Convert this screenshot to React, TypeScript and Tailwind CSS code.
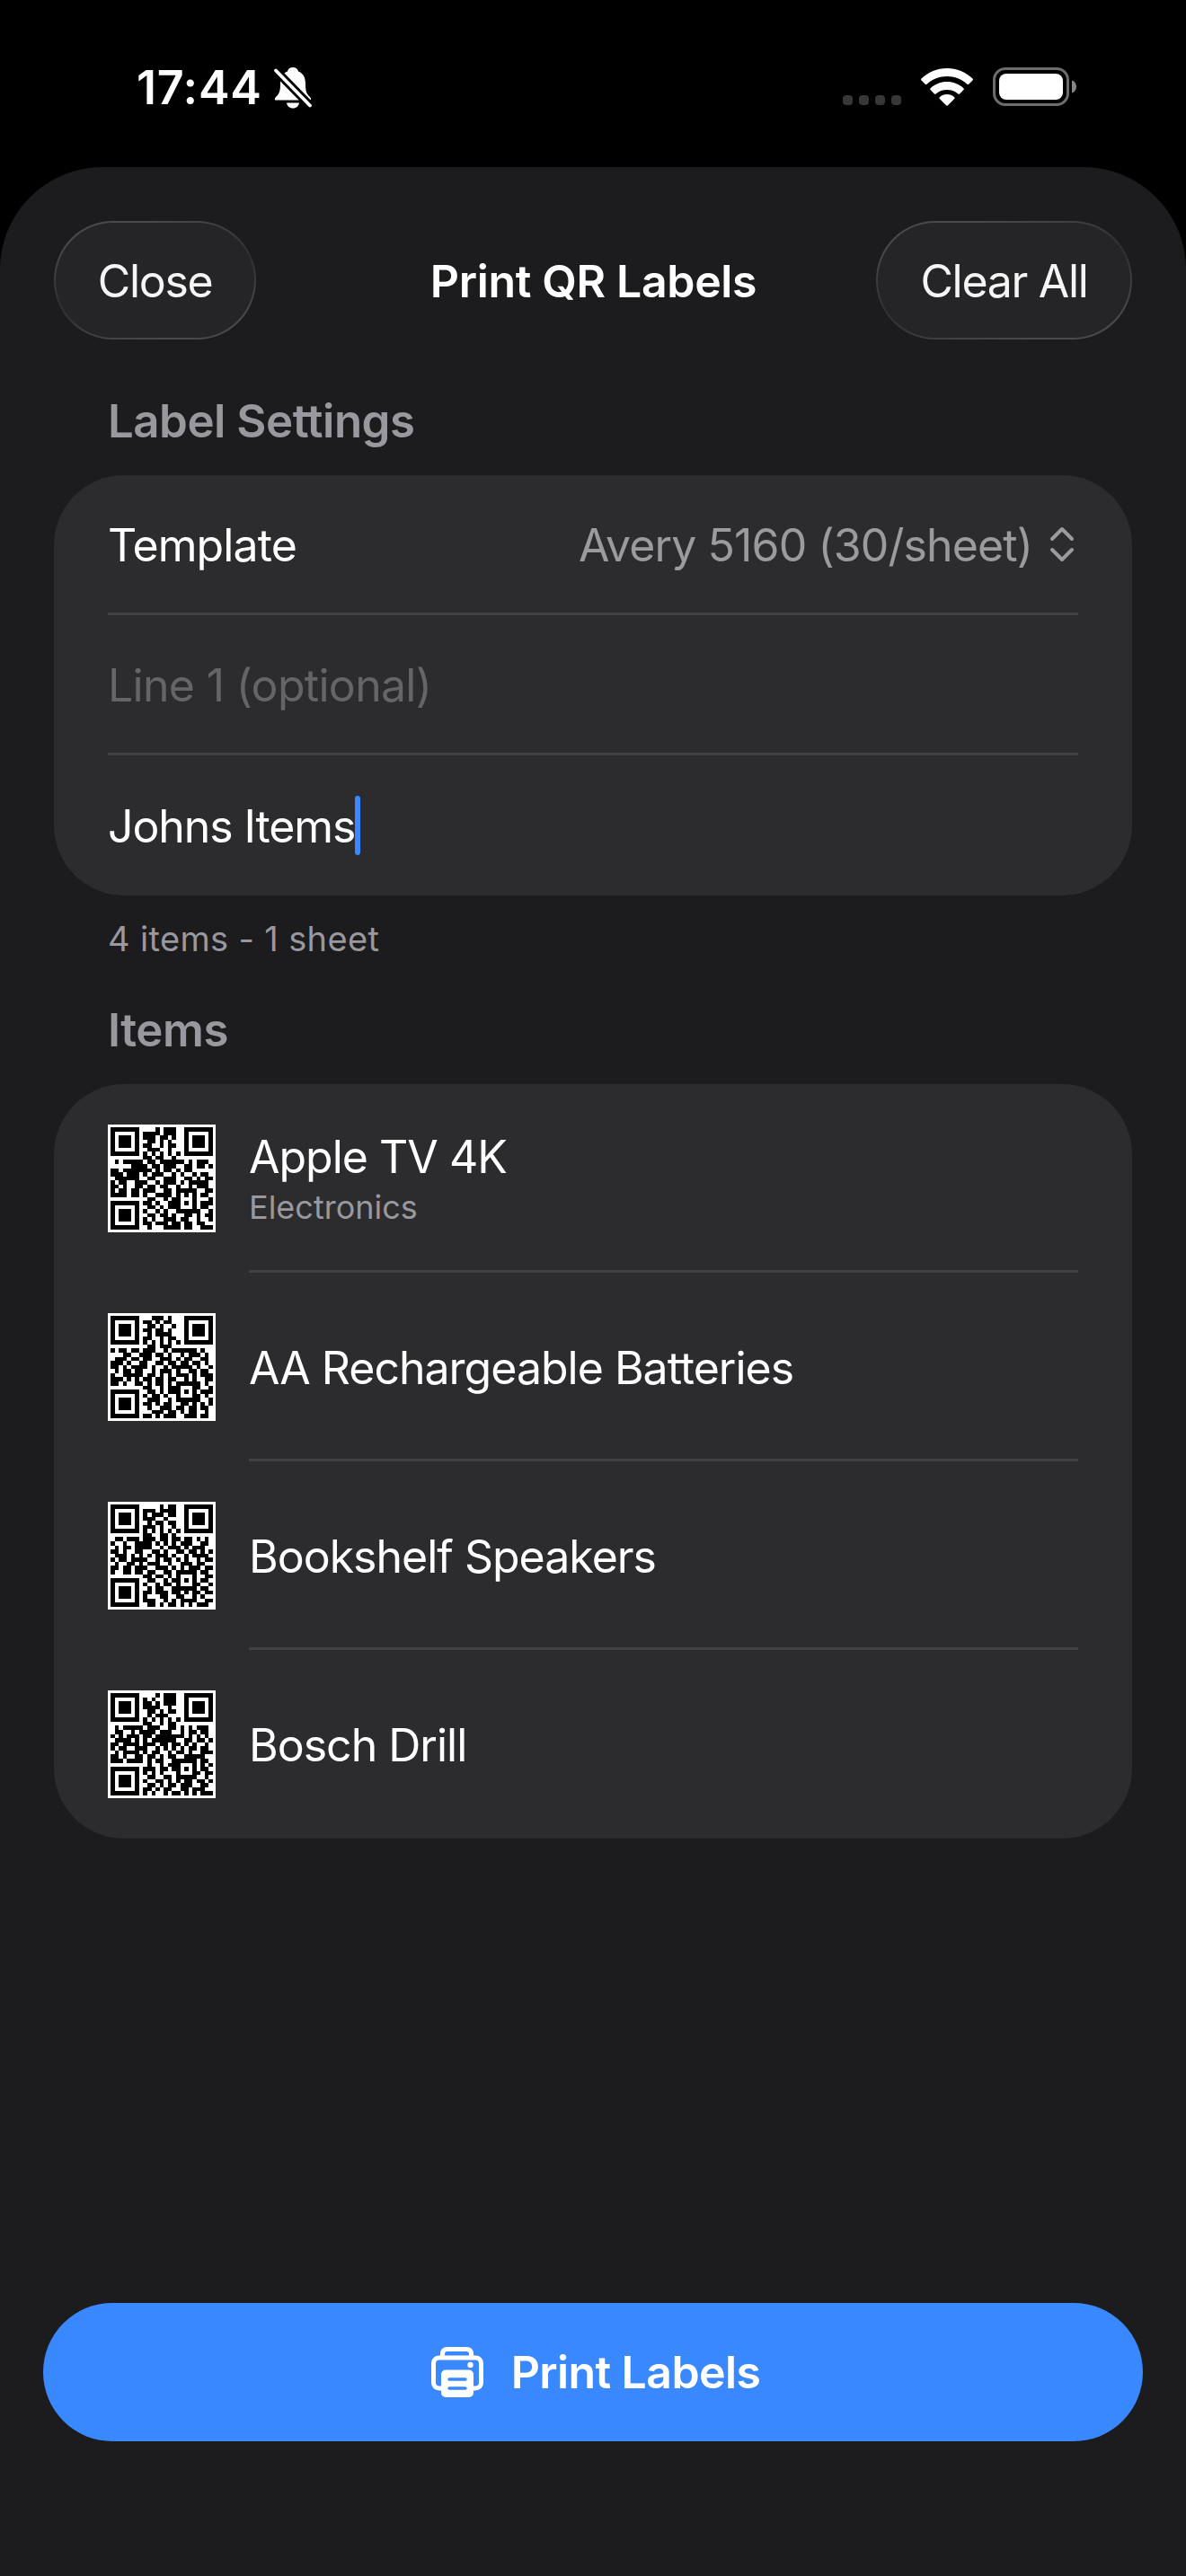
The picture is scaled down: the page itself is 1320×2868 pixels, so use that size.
import type { ReactNode } from "react";

type Item = {
  name: string;
  category?: string;
  code: string[];
};

const ITEMS: Item[] = [
  {
    name: "Apple TV 4K",
    category: "Electronics",
    code: [
      "...........#.###.........",
      "........####.###.........",
      "........###.##.#.........",
      ".........##.#.#..........",
      "........##..#.##.........",
      ".........###..#..........",
      "........#.#.#.#.#........",
      "........##.##..#.........",
      ".#.#####.##.######.#.###.",
      ".....####.##.###..##.##.#",
      "##.#######.#.##.#.##.....",
      "###.###.#.###..#.#..#.##.",
      ".######..##..###..##.#.##",
      "#.##..###..#.###.#.#####.",
      "##.#..##.##.##..#..#.###.",
      "#.##.##.###..##.#####..##",
      "####.##.#..####.#.#.#.##.",
      ".........##..#.##...#...#",
      "........##.#..###.#.#.###",
      ".........##.#.###...#.##.",
      "........#..#.#..######..#",
      ".........##.##.#..##.#.##",
      "........#.#..###.##..#..#",
      "........##.###.##.##.##..",
      ".........#...####.##..###",
    ],
  },
  {
    name: "AA Rechargeable Batteries",
    code: [
      "..........###.#..........",
      "........##.#.##..........",
      ".........##.#..#.........",
      "........##.##.#..........",
      ".........#.####..........",
      "........##..#.##.........",
      "........#.#.#.#.#........",
      ".........##.###..........",
      "#.##.##.###..#.######.#..",
      "...##..###.##.#..#.###.#.",
      ".###.##.##..###.#.##..##.",
      "###.#..##..##.##.##.##.#.",
      "##.#.####.#..#.#####.#..#",
      ".#.##.##..#.###.#..##.##.",
      "#..#####.##.#.#.###.#.###",
      "###.#.#.##.##.##..#.#..##",
      "##.#..##.#.##.#.######.#.",
      "........##..#.###...##..#",
      ".........##.#.###.#.#.###",
      "........#.##.#..#...##.#.",
      ".........###..#.######..#",
      "........##.#.##..##.#.#.#",
      ".........#..###.##.##.##.",
      "..........###.##.#.##..#.",
      "........##.#.###..###.##.",
    ],
  },
  {
    name: "Bookshelf Speakers",
    code: [
      "............#.##.........",
      "........###.####.........",
      "........#.###.##.........",
      "........###..#...........",
      ".........#.##.##.........",
      "........###.#..#.........",
      "........#.#.#.#.#........",
      "........##..##.#.........",
      ".##.###.###.##.##.##.#.#.",
      "#..#..####.#.#.#.###..##.",
      ".#.##.####..#.###.#.###..",
      "##.#..##..##.#..##.##.#.#",
      ".###.#.#.#.###.#..#.####.",
      "#.##.####..#.##.#.#..#.##",
      ".#..##.#.###..#..###.##..",
      "##.##.###..###.#.#.###.##",
      "#..##.##.##..##.#####.##.",
      "........##.##.#.#...#..##",
      ".........##..#.##.#.#.##.",
      "........#..#.##.#...##..#",
      ".........#.##..######.##.",
      "........##.###.##.#.##.##",
      "........#...##..##..#.#..",
      "........###..#.#.####..##",
      ".........##.#.##.#.#.###.",
    ],
  },
  {
    name: "Bosch Drill",
    code: [
      "...........#.###.........",
      "........#.#..###.........",
      "........##.#.###.........",
      "........####..#..........",
      ".........##.#.##.........",
      ".........#.###...........",
      "........#.#.#.#.#........",
      "........##..#.##.........",
      ".#.#####.###..##.#.#.###.",
      ".##..#.####.###..#.##.##.",
      "#.#.###.##.#######.#.#.#.",
      ".####.#.#.######..##.##.#",
      "##.####.###.##.##.#.#..#.",
      "#.##..###..#.#.#.#.##.##.",
      ".#.####.#.##..#.##.#..###",
      "##.#..##.##.#.##..#####..",
      "###.####.#.##..######.##.",
      ".........#..#.###...#.#.#",
      "........###.##.##.#.#.##.",
      "........#.#.#...#...##.##",
      ".........##..##.#####..#.",
      "........#..##.#.#.##.##.#",
      ".........##.#.##.###..##.",
      "........##.#.##..##.###..",
      "........#.#..#.##.#.#.###",
    ],
  },
];

const FINDERS = [
  [0, 0],
  [18, 0],
  [0, 18],
];

const QrCode = ({ code }: { code: string[] }) => {
  const modules = code
    .flatMap((row, y) =>
      [...row].map((cell, x) => (cell === "#" ? `M${x} ${y}h1v1h-1z` : "")),
    )
    .join("");

  return (
    <svg
      viewBox="-0.65 -0.65 26.3 26.3"
      className="size-[120px] shrink-0 bg-white"
      shapeRendering="crispEdges"
    >
      <path d={modules} fill="#000" />
      {FINDERS.map(([x, y]) => (
        <g key={`${x}-${y}`}>
          <rect x={x} y={y} width="7" height="7" fill="#000" />
          <rect x={x + 1} y={y + 1} width="5" height="5" fill="#fff" />
          <rect x={x + 2} y={y + 2} width="3" height="3" fill="#000" />
        </g>
      ))}
    </svg>
  );
};

const BellOff = () => (
  <svg viewBox="0 0 42 46" className="h-[46px] w-[42px]" fill="#fff">
    <path d="M21 0c-3.300 0-5.600 2-6 4.400C8.500 7 7 12.500 7 19c0 8-1.500 10.500-4.500 13.500C.5 34.500 0 36.500 2.500 36.500h37c2.500 0 2-2 0-4C36.500 29.500 35 27 35 19c0-6.500-1.500-12-8-14.600C26.600 2 24.300 0 21 0z" />
    <path d="M14 39.500h14c-.5 3.700-3.400 6-7 6s-6.500-2.300-7-6z" />
    <path d="M2 3.500l38 39" stroke="#000" strokeWidth="9.500" strokeLinecap="round" />
    <path d="M2 3.500l38 39" stroke="#fff" strokeWidth="3.800" strokeLinecap="round" />
  </svg>
);

const Wifi = () => (
  <svg viewBox="0 0 58 42" className="h-[42px] w-[58px]" fill="#fff">
    <path d="M29 0c11 0 21 4.300 28.500 11.500.6.6.6 1.300 0 1.900l-4.300 4.300c-.5.500-1.200.5-1.800 0C45.500 12 37.500 9 29 9S12.500 12 6.600 17.700c-.6.5-1.300.5-1.800 0L.5 13.400c-.6-.6-.6-1.300 0-1.900C8 4.300 18 0 29 0z" />
    <path d="M29 15c7 0 13.500 2.700 18.400 7.200.6.6.6 1.300 0 1.900l-4.300 4.300c-.6.5-1.200.5-1.800 0C38 25.500 33.700 24 29 24s-9 1.500-12.300 4.400c-.6.5-1.200.5-1.800 0l-4.300-4.300c-.6-.6-.6-1.300 0-1.900C15.500 17.700 22 15 29 15z" />
    <path d="M29 29c3.200 0 6 1.200 8.200 3.200.6.500.6 1.200 0 1.800L30 41.300c-.6.600-1.400.6-2 0L20.800 34c-.6-.6-.6-1.300 0-1.800C23 30.200 25.800 29 29 29z" />
  </svg>
);

const Battery = () => (
  <svg viewBox="0 0 94 43" className="h-[43px] w-[94px]">
    <rect x="1.500" y="1.500" width="82" height="40" rx="12.500" fill="none" stroke="#6c6c6c" strokeWidth="3" />
    <rect x="7" y="7" width="71" height="29" rx="8" fill="#fff" />
    <path d="M88 14.500c3.300 1 5 3.700 5 7s-1.700 6-5 7z" fill="#858585" />
  </svg>
);

const StatusBar = () => (
  <div className="flex h-[186px] items-start justify-between pt-[75px] pr-[121px] pl-[152px]">
    <div className="flex items-center gap-[13px]">
      <span className="text-[52px] leading-[46px] font-semibold tracking-[0.7px]">17:44</span>
      <BellOff />
    </div>
    <div className="flex items-center">
      <div className="mt-[30px] mr-[22px] flex gap-[7px]">
        {[0, 1, 2, 3].map((dot) => (
          <span key={dot} className="h-[11px] w-[11px] rounded-[4px] bg-[#373737]" />
        ))}
      </div>
      <Wifi />
      <div className="ml-[22px]">
        <Battery />
      </div>
    </div>
  </div>
);

const GlassButton = ({ children, className }: { children: ReactNode; className: string }) => (
  <button
    className={`h-[132px] rounded-full bg-linear-165 from-[#4a4a4c] from-15% via-[#303032] to-[#4a4a4c] to-85% p-[2px] ${className}`}
  >
    <span className="flex h-full items-center justify-center rounded-full bg-[#252527] pt-[2px] text-[50px] tracking-[-1.3px] text-[#f5f5f6]">
      {children}
    </span>
  </button>
);

const ChevronUpDown = () => (
  <svg
    viewBox="0 0 28 40"
    className="h-[40px] w-[28px]"
    fill="none"
    stroke="#9a9a9f"
    strokeWidth="4"
    strokeLinecap="round"
    strokeLinejoin="round"
  >
    <path d="M3 14L14 3l11 11M3 26l11 11 11-11" />
  </svg>
);

const Printer = () => (
  <svg viewBox="0 0 58 56" className="h-[56px] w-[58px]" fill="none">
    <path
      d="M12 46H9c-4 0-6.500-2.500-6.500-6.500V18.500C2.500 14.500 5 12 9 12h40c4 0 6.500 2.500 6.500 6.500v21c0 4-2.500 6.500-6.500 6.500h-3"
      stroke="#fff"
      strokeWidth="5"
    />
    <path d="M12.500 12V8c0-3.500 2-5.500 5.500-5.500h21c3.500 0 5.500 2 5.500 5.500v4" stroke="#fff" strokeWidth="5" />
    <circle cx="43.500" cy="20" r="3.200" fill="#fff" />
    <rect x="11" y="25.500" width="36" height="30.500" rx="5" fill="#fff" />
    <path d="M20 36h18M20 46h18" stroke="#3988fe" strokeWidth="3.500" strokeLinecap="round" />
  </svg>
);

const SectionTitle = ({ children }: { children: ReactNode }) => (
  <h2 className="text-[51px] leading-[60px] font-semibold tracking-[-0.5px] text-[#98989e]">{children}</h2>
);

const App = () => {
  return (
    <div className="flex h-[2868px] w-[1320px] flex-col bg-black font-['Inter','Liberation_Sans',sans-serif] text-white">
      <StatusBar />

      <main className="flex grow flex-col rounded-t-[114px] bg-[#1c1c1e] px-[60px] pt-[60px]">
        <header className="flex items-center justify-between">
          <GlassButton className="w-[225px]">Close</GlassButton>
          <h1 className="pt-[2px] pl-[61px] text-[50px] font-semibold tracking-[-0.35px]">Print QR Labels</h1>
          <GlassButton className="w-[285px]">Clear All</GlassButton>
        </header>

        <section className="mt-[61px]">
          <div className="px-[60px]">
            <SectionTitle>Label Settings</SectionTitle>
          </div>
          <div className="mt-[30px] flex h-[468px] flex-col rounded-[78px] bg-[#2c2c2e] px-[60px] text-[50px] tracking-[-0.9px]">
            <div className="flex h-[156px] items-center justify-between border-b-[3px] border-[#414144] pt-[4px]">
              <span>Template</span>
              <div className="flex items-center gap-[19px] pr-[4px] text-[#9a9a9f]">
                <span>Avery 5160 (30/sheet)</span>
                <div className="-mt-[4px]">
                  <ChevronUpDown />
                </div>
              </div>
            </div>
            <div className="flex h-[156px] items-center border-b-[3px] border-[#414144] pt-[4px] tracking-[-0.7px] text-[#656569]">
              Line 1 (optional)
            </div>
            <div className="flex h-[156px] items-center">
              <span className="pt-[3px] tracking-[-1.1px]">Johns Items</span>
              <span className="h-[66px] w-[6px] rounded-full bg-[#3988fe]" />
            </div>
          </div>
          <p className="mt-[20px] px-[60px] text-[38px] leading-[56px] tracking-[0.35px] text-[#98989e]">
            4 items - 1 sheet
          </p>
        </section>

        <section className="mt-[44px]">
          <div className="px-[60px]">
            <SectionTitle>Items</SectionTitle>
          </div>
          <ul className="mt-[30px] rounded-[78px] bg-[#2c2c2e] px-[60px]">
            {ITEMS.map((item) => (
              <li key={item.name} className="group flex h-[210px] items-center gap-[37px]">
                <QrCode code={item.code} />
                <div className="flex h-full grow flex-col justify-center border-b-[3px] border-[#414144] pt-[4px] group-last:border-transparent">
                  <p className="text-[50px] leading-[60px] tracking-[-1px]">{item.name}</p>
                  {item.category && (
                    <p className="pt-[2px] text-[36px] leading-[48px] text-[#98989e]">{item.category}</p>
                  )}
                </div>
              </li>
            ))}
          </ul>
        </section>

        <div className="-mx-[12px] mt-auto pb-[150px]">
          <button className="flex h-[154px] w-full items-center justify-center gap-[31px] rounded-full bg-[#3988fe] pl-[6px] text-[50px] font-semibold tracking-[-0.6px]">
            <Printer />
            <span>Print Labels</span>
          </button>
        </div>
      </main>
    </div>
  );
};

export default App;
